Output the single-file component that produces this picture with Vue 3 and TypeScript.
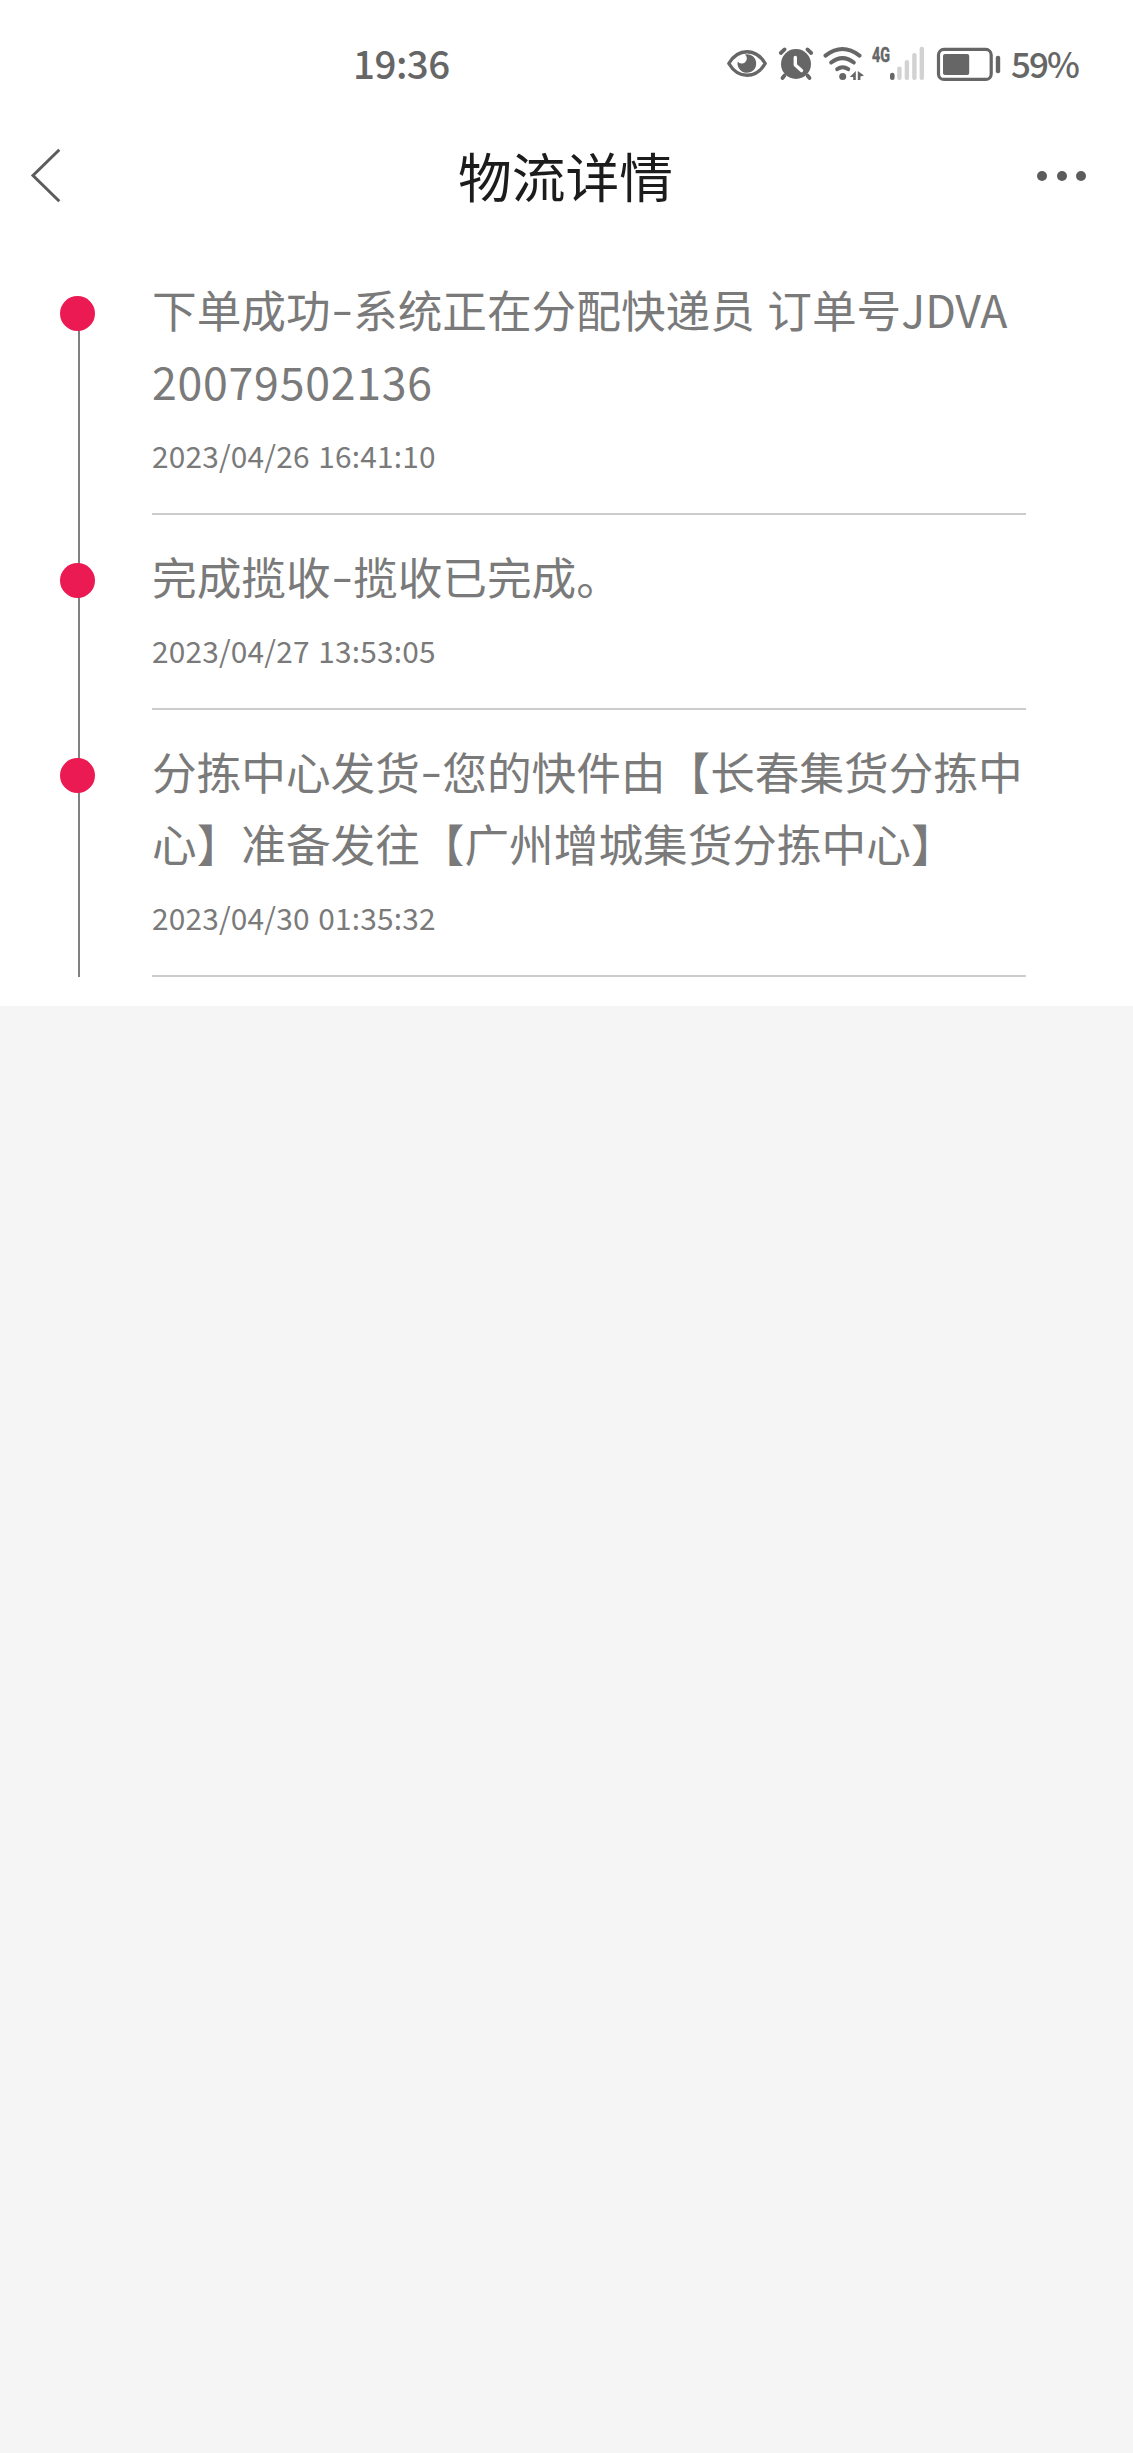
<script setup lang="ts">
type Kind = 'han' | 'dash' | 'gap' | 'digits' | 'letters'

interface Segment {
  kind: Kind
  text: string
}

interface TrackEvent {
  lines: Segment[][]
  time: string
}

const seg = (kind: Kind, text: string): Segment => ({ kind, text })

const events: TrackEvent[] = [
  {
    lines: [
      [
        seg('han', '下单成功'),
        seg('dash', '-'),
        seg('han', '系统正在分配快递员'),
        seg('gap', ' '),
        seg('han', '订单号'),
        seg('letters', 'JDVA'),
      ],
      [seg('digits', '20079502136')],
    ],
    time: '2023/04/26 16:41:10',
  },
  {
    lines: [[seg('han', '完成揽收'), seg('dash', '-'), seg('han', '揽收已完成。')]],
    time: '2023/04/27 13:53:05',
  },
  {
    lines: [
      [seg('han', '分拣中心发货'), seg('dash', '-'), seg('han', '您的快件由【长春集货分拣中')],
      [seg('han', '心】准备发往【广州增城集货分拣中心】')],
    ],
    time: '2023/04/30 01:35:32',
  },
]
</script>

<template>
  <div class="screen">
    <div class="panel">
      <div class="status">
        <span class="clock">19:36</span>
        <div class="indicators">
          <svg class="eye" width="42" height="36" viewBox="726 46 42 36">
            <path d="M728.8 63.5C733 56.5 739 51.8 747 51.8S761 56.5 765.2 63.5C761 70.5 755 75.3 747 75.3S733 70.5 728.8 63.5Z" fill="none" stroke="#666" stroke-width="3.4" stroke-linejoin="round" />
            <path d="M745 54.4A9.3 9.3 0 1 1 737.8 61.5A5 5 0 0 0 745.2 62.3A5.3 5.3 0 0 0 745 54.4Z" fill="#666" />
          </svg>
          <svg class="alarm" width="36" height="36" viewBox="778 46 36 36">
            <path d="M780.8 53L784.6 49.4M811.2 53L807.4 49.4M784.5 75.5L782.5 78M807.5 75.5L809.5 78" stroke="#666" stroke-width="3.8" stroke-linecap="round" />
            <circle cx="796" cy="64" r="15" fill="#666" />
            <path d="M795.3 57.5V65L801.5 70.5" fill="none" stroke="#fff" stroke-width="3.4" stroke-linecap="round" stroke-linejoin="round" />
          </svg>
          <svg class="wifi" width="44" height="36" viewBox="822 46 44 36">
            <g fill="none" stroke="#666" stroke-width="4" stroke-linecap="round">
              <path d="M825.5 55.6Q842.5 42.5 859.5 55.6" />
              <path d="M831.2 62.5Q842.5 53.8 853.8 62.5" />
              <path d="M837.2 69.2Q842.7 65.2 848.2 69.2" />
            </g>
            <circle cx="842.7" cy="76.5" r="3.5" fill="#666" />
            <path d="M855.8 71V80H853.2V77H849.8ZM857.8 71L864 75.4L860.4 76.6V80H857.8Z" fill="#666" />
          </svg>
          <svg class="cell" width="54" height="44" viewBox="871 42 54 44">
            <text x="872" y="61.8" class="net" textLength="18" lengthAdjust="spacingAndGlyphs">4G</text>
            <rect x="890" y="72.8" width="4.6" height="7.2" rx="2.3" fill="#666" />
            <g fill="#d2d2d2">
              <rect x="897.2" y="66.5" width="4.4" height="13.5" rx="2" />
              <rect x="904.7" y="60" width="4.4" height="20" rx="2" />
              <rect x="912.2" y="53" width="4.4" height="27" rx="2" />
              <rect x="919.6" y="46.8" width="4.4" height="33.2" rx="2" />
            </g>
          </svg>
          <svg class="battery" width="65" height="36" viewBox="936 46 65 36">
            <rect x="938.5" y="49.4" width="52.7" height="30" rx="5.5" fill="none" stroke="#666" stroke-width="3.2" />
            <rect x="943" y="54" width="26.2" height="21" rx="2" fill="#666" />
            <rect x="995.8" y="55.8" width="4.4" height="17.4" rx="2" fill="#666" />
          </svg>
          <span class="percent">59%</span>
        </div>
      </div>

      <header class="nav">
        <svg class="back" width="40" height="60" viewBox="28 146 40 60">
          <path d="M59.3 149.8L33 175.5L59.3 201.2" fill="none" stroke="#5c5c5c" stroke-width="3" />
        </svg>
        <h1 class="title">物流详情</h1>
        <div class="more"><i></i><i></i><i></i></div>
      </header>

      <ol class="track">
        <li v-for="event in events" :key="event.time" class="event">
          <div class="rail"><span class="dot"></span></div>
          <div class="body">
            <p v-for="(line, i) in event.lines" :key="i" class="line">
              <span v-for="(s, j) in line" :key="j" :class="s.kind">{{ s.text }}</span>
            </p>
            <time class="time">{{ event.time }}</time>
          </div>
        </li>
      </ol>
    </div>
  </div>
</template>

<style>
body {
  margin: 0;
  background: #f5f5f5;
}
</style>

<style scoped>
.screen {
  width: 1133px;
  height: 2453px;
  background: #f5f5f5;
  font-family: 'Noto Sans CJK SC', 'Noto Sans', sans-serif;
}
.panel {
  box-sizing: border-box;
  height: 1006px;
  background: #fff;
}
.status {
  display: flex;
  justify-content: space-between;
  height: 128px;
  padding: 0 48px 0 353px;
  color: #666;
  font-weight: 500;
}
.clock {
  height: 128px;
  font-size: 38.5px;
  line-height: 125px;
  letter-spacing: -0.5px;
}
.indicators {
  display: flex;
  align-items: center;
  width: 359px;
  height: 128px;
}
.indicators svg {
  flex: none;
  display: block;
}
.eye { margin-right: 10px; }
.alarm { margin-right: 8px; }
.wifi { margin-right: 5px; }
.cell { margin-right: 11px; }
.battery { margin-right: 10px; }
.net {
  font-family: Roboto, sans-serif;
  font-size: 20px;
  font-weight: 700;
  fill: #666;
  stroke: #666;
  stroke-width: 0.5px;
}
.percent {
  height: 128px;
  font-size: 35px;
  line-height: 126px;
  letter-spacing: -2px;
}
.nav {
  display: flex;
  align-items: center;
  justify-content: space-between;
  height: 96px;
  padding: 0 47px 0 28px;
}
.back {
  display: block;
  width: 40px;
  margin-right: 26px;
}
.title {
  height: 96px;
  margin: 0;
  color: #1c1c1c;
  font-size: 53.8px;
  font-weight: 400;
  line-height: 93px;
}
.more {
  display: flex;
  gap: 9.5px;
}
.more i {
  width: 10px;
  height: 10px;
  border-radius: 50%;
  background: #5c5c5c;
}
.track {
  margin: 0;
  padding: 24px 107px 0 60px;
  list-style: none;
}
.event {
  display: flex;
}
.rail {
  width: 92px;
  padding-top: 48px;
  background: linear-gradient(#808080, #808080) 18px 0 / 2px 100% no-repeat;
}
.event:first-child .rail {
  background-size: 2px calc(100% - 60px);
  background-position: 18px 100%;
}
.dot {
  display: block;
  width: 35px;
  height: 35px;
  border-radius: 50%;
  background: #ec1a52;
}
.body {
  flex: 1;
  padding-top: 25px;
  border-bottom: 2px solid #ccc;
}
.line {
  display: flex;
  height: 71.5px;
  margin: 0;
  color: #7a7a7a;
  font-size: 44.65px;
  line-height: 71.5px;
  white-space: pre;
}
.dash {
  width: 22.5px;
  text-align: center;
  transform: translateY(-2px) scaleX(1.4);
}
.gap {
  width: 12.5px;
}
.digits {
  letter-spacing: 0.75px;
}
.time {
  display: block;
  height: 96.8px;
  color: #7a7a7a;
  font-size: 29.8px;
  line-height: 79px;
  letter-spacing: 0.2px;
  word-spacing: 1.8px;
}
</style>
